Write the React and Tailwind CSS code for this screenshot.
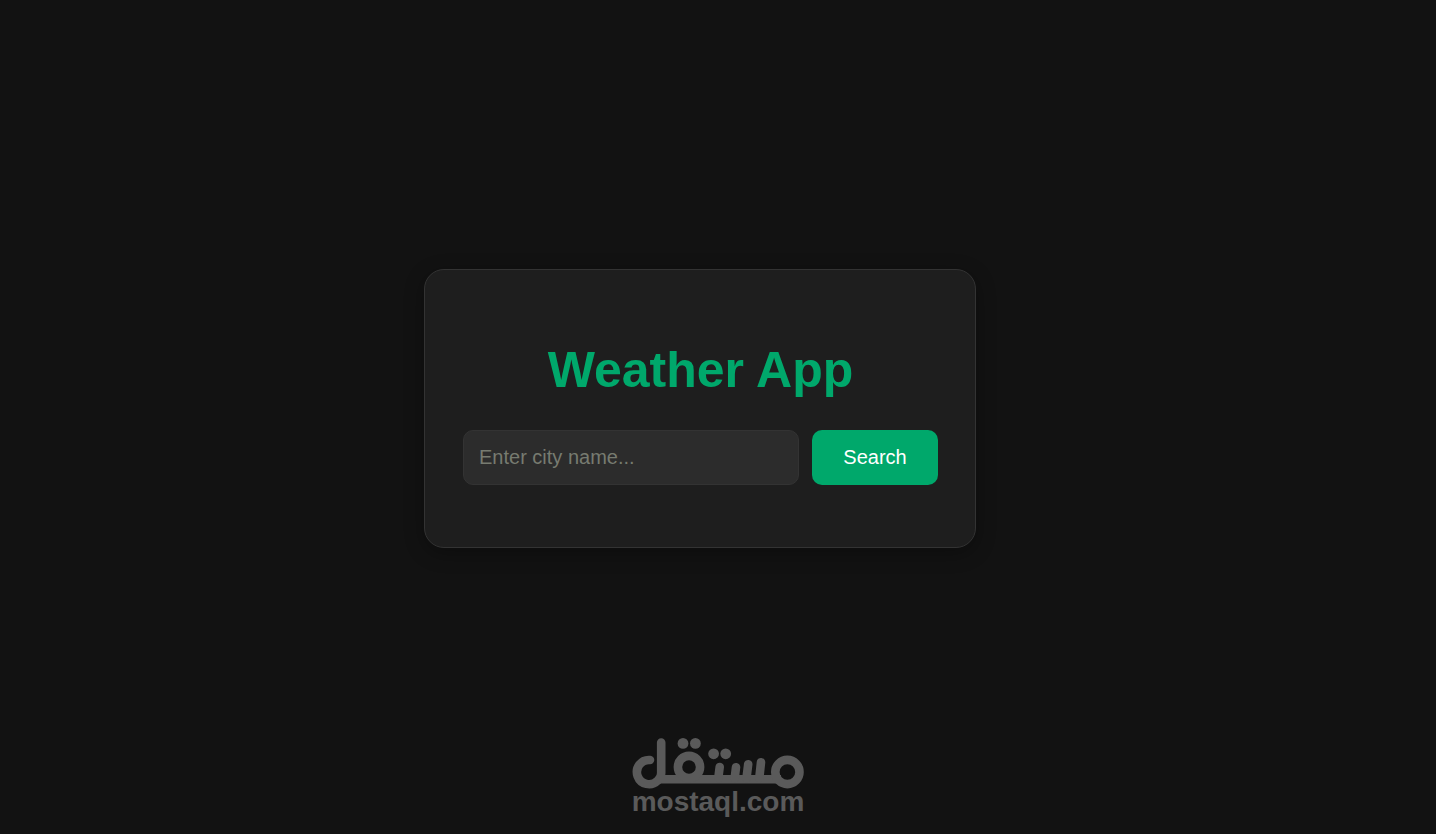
import { useState } from "react";

function Watermark() {
  return (
    <div className="absolute bottom-5 left-1/2 flex -translate-x-1/2 flex-col items-center text-[#5a5a5a]">
      <svg
        width="176"
        height="54"
        viewBox="0 0 176 54"
        fill="none"
        stroke="currentColor"
        strokeWidth="8.6"
        strokeLinecap="round"
        role="img"
        aria-label="مستقل"
      >
        <path d="M20 24A12.1 12.1 0 1 0 27.5 44.7Q31.2 42 31.2 37V6.5" />
        <path d="M27 43.2H151" strokeLinecap="butt" />
        <circle cx="59" cy="31" r="11.1" />
        <circle cx="157.4" cy="36" r="12.1" />
        <path d="M89.7 31L88.3 42M106 31.2L104.7 42M118.2 28.2L116.5 42M131 26.2L129.3 42" />
        <g fill="currentColor" stroke="none">
          <circle cx="53" cy="7.4" r="5.4" />
          <circle cx="65.4" cy="7.4" r="5.4" />
          <circle cx="83.6" cy="17.8" r="5.4" />
          <circle cx="95.7" cy="17.8" r="5.4" />
        </g>
      </svg>
      <span className="text-[28px] leading-6 font-bold">mostaql.com</span>
    </div>
  );
}

export default function App() {
  const [city, setCity] = useState("");

  function onSearch(e) {
    e.preventDefault();
  }

  return (
    <div className="relative flex min-h-screen items-center justify-center bg-[#121212] pr-9 pb-[18px] font-['Liberation_Sans',Arial,sans-serif]">
      <main className="w-full max-w-[552px] rounded-[20px] border border-[#333333] bg-[#1e1e1e] pt-[71px] pr-[37px] pb-[62px] pl-[38px] shadow-[0_5px_20px_rgba(0,0,0,0.3)]">
        <h1 className="mb-[31px] text-center text-[50px] leading-[58px] font-bold text-[#00a86b]">
          Weather App
        </h1>
        <form className="flex gap-[13px]" onSubmit={onSearch}>
          <input
            type="text"
            aria-label="City name"
            className="h-[55px] min-w-0 flex-1 rounded-[10px] border border-[#333333] bg-[#2c2c2c] px-[15px] text-[20px] text-white outline-none placeholder:text-[#777b70]"
            placeholder="Enter city name..."
            value={city}
            onChange={(e) => setCity(e.target.value)}
          />
          <button
            type="submit"
            className="h-[55px] w-[126px] cursor-pointer rounded-[10px] bg-[#00a86b] text-[20px] text-white"
          >
            Search
          </button>
        </form>
      </main>
      <Watermark />
    </div>
  );
}
